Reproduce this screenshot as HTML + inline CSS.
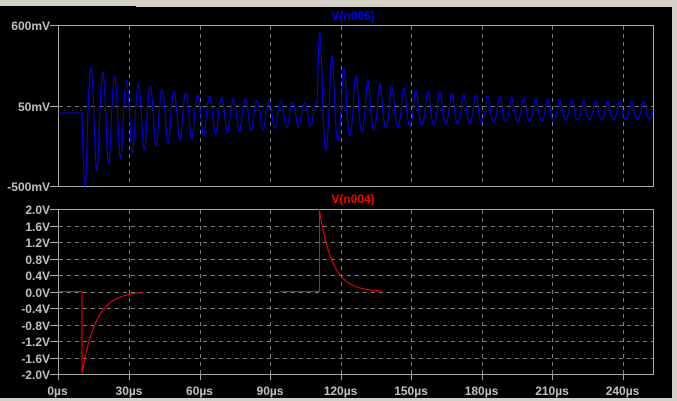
<!DOCTYPE html>
<html><head><meta charset="utf-8"><style>
html,body{margin:0;padding:0;background:#000;width:677px;height:401px;overflow:hidden}
svg{display:block}
text{font-family:"Liberation Sans",sans-serif;font-size:12px;font-weight:bold;fill:#c0c0c0}
</style></head><body>
<svg id="s" width="677" height="401" xmlns="http://www.w3.org/2000/svg">
<rect x="0" y="0" width="677" height="401" fill="#000"/>
<rect x="0" y="0" width="677" height="6" fill="#d4d0c8"/>
<rect x="136" y="0" width="541" height="7" fill="#d4d0c8"/>
<rect x="672" y="0" width="5" height="401" fill="#d4d0c8"/>
<rect x="0" y="398" width="677" height="3" fill="#d4d0c8"/>
<g id="grid" stroke="#808080" stroke-width="1" stroke-dasharray="4,4" fill="none"></g>
<rect x="58.5" y="25.5" width="595" height="161" fill="none" stroke="#a8a8a8"/>
<rect x="58.5" y="209.5" width="595" height="165" fill="none" stroke="#a8a8a8"/>
<g id="ticks" stroke="#a8a8a8"></g>
<g id="labels"></g>
<text x="353" y="20" text-anchor="middle" style="fill:#0000ff">V(n005)</text>
<text x="353" y="203" text-anchor="middle" style="fill:#ff0000">V(n004)</text>
<polyline id="blue" fill="none" stroke="#0000ff" stroke-width="1"/>
<g id="red" fill="none" stroke="#ff0000" stroke-width="1"></g>
</svg>
<script>
var ns="http://www.w3.org/2000/svg";
function el(p,t,a,txt){var e=document.createElementNS(ns,t);for(var k in a)e.setAttribute(k,a[k]);if(txt)e.textContent=txt;document.getElementById(p).appendChild(e);return e;}
function X(t){return 58.5+t*70.5/30;}
for(var i=1;i<=8;i++){var x=Math.round(X(i*30))+0.5;
 el('grid','line',{x1:x,y1:26,x2:x,y2:186});el('grid','line',{x1:x,y1:210,x2:x,y2:374});
 el('ticks','line',{x1:x,y1:374,x2:x,y2:380});}
el('ticks','line',{x1:58.5,y1:374,x2:58.5,y2:380});
for(var i=0;i<=8;i++){el('labels','text',{x:X(i*30)+(i==0?-1:0),y:395,'text-anchor':'middle'},(i*30)+'µs');}
el('grid','line',{x1:59,y1:106.5,x2:653,y2:106.5});
[[25.5,'600mV'],[106.5,'50mV'],[186.5,'-500mV']].forEach(function(a){
 el('ticks','line',{x1:50,y1:a[0],x2:58,y2:a[0]});
 el('labels','text',{x:50,y:a[0]+4.5,'text-anchor':'end'},a[1]);});
var lv=['2.0V','1.6V','1.2V','0.8V','0.4V','0.0V','-0.4V','-0.8V','-1.2V','-1.6V','-2.0V'];
for(var i=0;i<=10;i++){var y=Math.round(209+i*16.5)+0.5;
 if(i>0&&i<10)el('grid','line',{x1:59,y1:y,x2:653,y2:y});
 el('ticks','line',{x1:50,y1:y,x2:58,y2:y});
 el('labels','text',{x:50,y:y+4.5,'text-anchor':'end'},lv[i]);}
var pts=[];
pts.push(X(0)+',113');
for(var t=10;t<=253;t+=0.1){
 var A,y,s;
 if(t<110){A=45*Math.exp(-(t-10)/35)+8;
  s=Math.sin(2*Math.PI*(t-10)/5.05);y=113+A*s*(s>0?1.25:0.95);
  if(t<12.5){y=113+73*Math.sin(Math.PI*(t-10)/2.5);}
 }else{A=50*Math.exp(-(t-110)/8)+30*Math.exp(-(t-110)/60)+8;
  s=-Math.sin(2*Math.PI*(t-110)/5.1);y=113+A*s*(s>0?0.55:1.0);}
 y=Math.max(26,Math.min(186,y));
 pts.push(X(t).toFixed(1)+','+y.toFixed(1));}
document.getElementById('blue').setAttribute('points',pts.join(' '));
function seg(p){el('red','polyline',{points:p.join(' ')});}
var z=291.5;
seg([X(0)+','+z,'82,'+z,'82,374']);
var p=[];for(var t=10;t<=36;t+=0.2){p.push(X(t).toFixed(1)+','+(z+82*Math.exp(-(t-10)/6)).toFixed(1));}seg(p);
p=['280,'+z,'319.5,'+z,'319.5,209'];for(var t=111;t<=137;t+=0.2){p.push(X(t).toFixed(1)+','+(z-82*Math.exp(-(t-111)/5.5)).toFixed(1));}p.push('380,'+z);seg(p);
</script>
</body></html>
